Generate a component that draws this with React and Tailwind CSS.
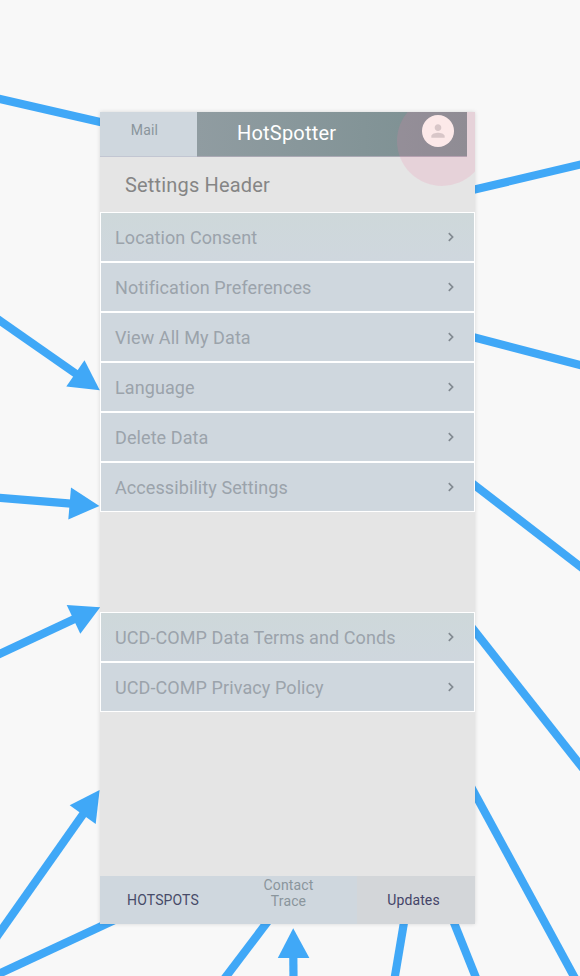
import React from "react";

const lines = [
  [-10, 96.7, 110, 124.3],
  [-10, 313.7, 77, 374.5],
  [-10, 497.1, 71, 503.7],
  [-10, 658.4, 75, 618.8],
  [-10, 946.2, 83.5, 813.6],
  [-10, 978, 120, 917.5],
  [273.4, 914, 218.9, 986],
  [405.4, 914, 393.3, 986],
  [450.5, 914, 479.3, 986],
  [465, 191.8, 590, 162.3],
  [465, 335, 590, 367.6],
  [465, 477.8, 590, 574],
  [465, 618.8, 590, 777.4],
  [465, 775.6, 579.2, 986],
  [293.3, 957, 293.6, 986],
];

const heads = [
  "84.5,360.3 66.3,386.5 99.8,390.2",
  "71,487.5 68.3,519.6 99.4,505.9",
  "66.7,605 80.3,633.8 100.2,607.2",
  "69.7,805.3 95.7,824 99.6,790",
  "293.2,928.3 277.8,958 309.4,958",
];

function Arrows() {
  return (
    <svg className="absolute inset-0" width="580" height="976" viewBox="0 0 580 976">
      {lines.map(([x1, y1, x2, y2], i) => (
        <line key={i} x1={x1} y1={y1} x2={x2} y2={y2} stroke="#40a8f7" strokeWidth="8.2" />
      ))}
      {heads.map((p) => (
        <polygon key={p} points={p} fill="#40a8f7" />
      ))}
    </svg>
  );
}

function Row({ label }) {
  return (
    <div className="flex h-[50px] items-center justify-between border border-white bg-[#cfd7de] pl-[14px] pr-[17px] first:bg-linear-to-b first:from-[#ced8da] first:to-[#cfd7de]">
      <span className="pt-0.5 text-[18px] leading-6 tracking-[0.09px] text-[#9ba3ab]">{label}</span>
      <svg width="12" height="12" viewBox="0 0 12 12" fill="none" stroke="#828a91" strokeWidth="1.7">
        <path d="M3.8 2.2 7.6 6 3.8 9.8" />
      </svg>
    </div>
  );
}

function Header() {
  return (
    <header className="flex h-[45px] shrink-0">
      <div className="flex w-[97px] justify-center border-b border-[#c2c6d2] bg-[#cfd7de] pr-2 pt-2">
        <span className="text-[14px] leading-5 tracking-[0.2px] text-[#8a959c]">Mail</span>
      </div>
      <div className="flex w-[269.5px] justify-between border-b border-[#aaa9b4] bg-linear-to-r from-[#909ca1] to-[#7b8f91] pl-10 pr-[13px]">
        <h1 className="pt-[9px] text-[20px] leading-6 tracking-[0.2px] text-white">HotSpotter</h1>
        <div className="relative z-10 mt-[3px] flex size-8 items-center justify-center rounded-full bg-[#fce9e9]">
          <svg width="20" height="20" viewBox="0 0 24 24" fill="#d8c6c8">
            <path d="M12 12c2.21 0 4-1.79 4-4s-1.79-4-4-4-4 1.79-4 4 1.79 4 4 4zm0 2c-2.67 0-8 1.34-8 4v2h16v-2c0-2.66-5.33-4-8-4z" />
          </svg>
        </div>
      </div>
    </header>
  );
}

export default function App() {
  return (
    <div className="relative h-[976px] w-[580px] overflow-hidden bg-[#f8f8f8] pl-[100px] pt-[112px] font-[Roboto,sans-serif]">
      <Arrows />
      <div className="relative h-[812px] w-[375px] shadow-[0_0_4px_rgba(0,0,0,0.14)]">
        <div className="relative flex h-full flex-col overflow-hidden bg-[#e5e5e5]">
          <Header />
          <div className="absolute left-[296.5px] top-[-16px] size-[90px] rounded-full bg-[#ef7fa5]/18" />
          <h2 className="flex h-[55px] shrink-0 items-center pl-[25px] text-[20px] tracking-[0.17px] text-[#858585]">
            Settings Header
          </h2>
          <div>
            <Row label="Location Consent" />
            <Row label="Notification Preferences" />
            <Row label="View All My Data" />
            <Row label="Language" />
            <Row label="Delete Data" />
            <Row label="Accessibility Settings" />
          </div>
          <div className="mt-[100px]">
            <Row label="UCD-COMP Data Terms and Conds" />
            <Row label="UCD-COMP Privacy Policy" />
          </div>
          <nav className="mt-auto flex h-12 text-center text-[14px] leading-4 tracking-[0.12px]">
            <div className="flex w-[126px] items-center justify-center bg-[#cfd7de] text-[#474b68]">HOTSPOTS</div>
            <div className="w-[131px] bg-[#cfd7de] pt-px pr-[6px] text-[#8a959c]">
              Contact
              <br />
              Trace
            </div>
            <div className="flex flex-1 items-center justify-center bg-[#d3d6d9] pr-[5px] text-[#444468]">Updates</div>
          </nav>
        </div>
      </div>
    </div>
  );
}
